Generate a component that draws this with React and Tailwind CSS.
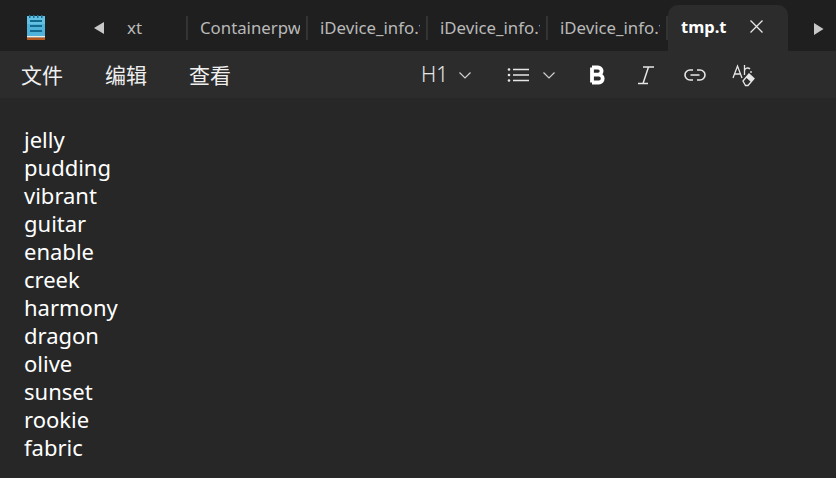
const font = { sans: "font-['Noto_Sans','Noto_Sans_CJK_SC',sans-serif]" };

const words = ["jelly", "pudding", "vibrant", "guitar", "enable", "creek", "harmony", "dragon", "olive", "sunset", "rookie", "fabric"];
const tabs = ["Containerpw", "iDevice_info.txt", "iDevice_info.txt", "iDevice_info.txt"];

function NotepadIcon() {
  return (
    <svg width="20" height="26" viewBox="0 0 20 26">
      <rect x="1" y="2" width="18" height="22" fill="#4fb3d9" />
      <rect x="1" y="2" width="18" height="8" fill="#62c1e3" />
      <rect x="1" y="22" width="18" height="1.5" fill="#f0ece4" />
      <rect x="1" y="23.5" width="18" height="2.5" fill="#b5561b" />
      <rect x="3" y="1" width="1.5" height="3" fill="#1c6f93" />
      <rect x="7" y="1" width="1.5" height="3" fill="#1c6f93" />
      <rect x="11" y="1" width="1.5" height="3" fill="#1c6f93" />
      <rect x="15" y="1" width="1.5" height="3" fill="#1c6f93" />
      <rect x="4" y="6" width="12" height="2" fill="#14698f" />
      <rect x="4" y="11" width="12" height="2" fill="#14698f" />
      <rect x="4" y="16" width="12" height="2" fill="#14698f" />
    </svg>
  );
}

function Chevron() {
  return (
    <svg width="14" height="14" viewBox="0 0 14 14" fill="none" stroke="#d0d0d0" strokeWidth="1.2">
      <path d="M1.5 4.5 7 10l5.5-5.5" />
    </svg>
  );
}

function Arrow({ left }) {
  return (
    <svg width="10" height="12" viewBox="0 0 10 12" fill="#c8c8c8">
      <path d={left ? "M10 0v12L0 6z" : "M0 0v12l9.5-6z"} />
    </svg>
  );
}

function Tab({ label }) {
  return (
    <div className="w-[120px] h-[24px] shrink-0 border-r-2 border-[#333333] pl-[12px] pr-[6px] text-[16.8px] leading-[24px] text-[#b9b9b9]">
      <div className="overflow-hidden whitespace-nowrap">{label}</div>
    </div>
  );
}

export default function App() {
  return (
    <div className={`w-[836px] h-[478px] overflow-hidden flex flex-col bg-[#272727] ${font.sans}`}>
      <div className="h-[51px] shrink-0 flex items-end bg-[#1f1f1f]">
        <div className="w-[68px] h-full flex items-center pl-[26px] pt-[2px]">
          <NotepadIcon />
        </div>
        <div className="h-full flex items-center pt-[5px]">
          <div className="w-[120px] h-[24px] flex items-center border-r-2 border-[#333333] pl-[26px] text-[17px] text-[#b9b9b9]">
            <Arrow left />
            <span className="ml-[23px]">xt</span>
          </div>
          {tabs.map((t, i) => (
            <Tab key={i} label={t} />
          ))}
        </div>
        <div className="w-[120px] h-[46px] rounded-t-[10px] bg-[#2c2c2c] flex items-center pl-[13px] pb-[1px] text-white">
          <span className="text-[16.5px] font-bold w-[69px]">tmp.t</span>
          <svg className="-mt-[3px]" width="13" height="13" viewBox="0 0 13 13" stroke="#e8e8e8" strokeWidth="1.3">
            <path d="M.5.5l12 12M12.5.5l-12 12" />
          </svg>
        </div>
        <div className="h-full flex items-center pl-[26px] pt-[7px]">
          <Arrow />
        </div>
      </div>

      <div className="h-[47px] shrink-0 flex items-center bg-[#2c2c2c] text-[#efefef]">
        <div className="flex gap-[42px] pl-[21px] pt-[1px] text-[21px] leading-none">
          <span>文件</span>
          <span>编辑</span>
          <span>查看</span>
        </div>
        <div className="ml-[190px] flex items-center text-[#e6e6e6]">
          <span className="text-[21px] font-light w-[37px] leading-none">H1</span>
          <Chevron />
          <svg className="ml-[35px]" width="22" height="16" viewBox="0 0 22 16" stroke="#e6e6e6" strokeWidth="1.5" fill="#e6e6e6">
            <path d="M6 2.5h16M6 8h16M6 13.5h16" fill="none" />
            <circle cx="2" cy="2.5" r="1.3" stroke="none" />
            <circle cx="2" cy="8" r="1.3" stroke="none" />
            <circle cx="2" cy="13.5" r="1.3" stroke="none" />
          </svg>
          <span className="ml-[13px]"><Chevron /></span>
          <svg className="ml-[34px]" width="15" height="20" viewBox="0 0 15 20" fill="none" stroke="#ffffff" strokeWidth="3.8">
            <path d="M2 2.5v15M2 2.5h6a3.4 3.4 0 0 1 0 7.2H2M2 9.7h6.8a3.9 3.9 0 0 1 0 7.8H2" />
          </svg>
          <svg className="ml-[32px]" width="18" height="20" viewBox="0 0 18 20" fill="none" stroke="#e6e6e6" strokeWidth="1.5">
            <path d="M6 2h11M1 18.5h10M11.5 2 6 18.5" />
          </svg>
          <svg className="ml-[29px]" width="22" height="14" viewBox="0 0 22 14" fill="none" stroke="#e6e6e6" strokeWidth="1.6">
            <path d="M9 2H6a5 5 0 0 0 0 10h3M13 2h3a5 5 0 0 1 0 10h-3M6.5 7h9" />
          </svg>
          <svg className="ml-[25px]" width="24" height="24" viewBox="0 0 24 24" fill="none" stroke="#e6e6e6" strokeWidth="1.3">
            <path d="M2 15 6.5 3 11 15M3.6 11h5.8" />
            <path d="M13.5 2v10M13.5 8a3.2 3.2 0 0 1 5.5-2M20 8v2" />
            <path d="M12 18l6-7 5 4.5-6 7h-2.5z" fill="#2c2c2c" />
            <path d="M18 11l5 4.5-3 3.5-5-4.5z" fill="#e6e6e6" stroke="none" />
          </svg>
        </div>
      </div>

      <div className="flex-1 pt-[27px] pl-[24px] text-[22px] leading-[28px] text-white">
        {words.map((w) => (
          <p key={w}>{w}</p>
        ))}
      </div>
    </div>
  );
}
